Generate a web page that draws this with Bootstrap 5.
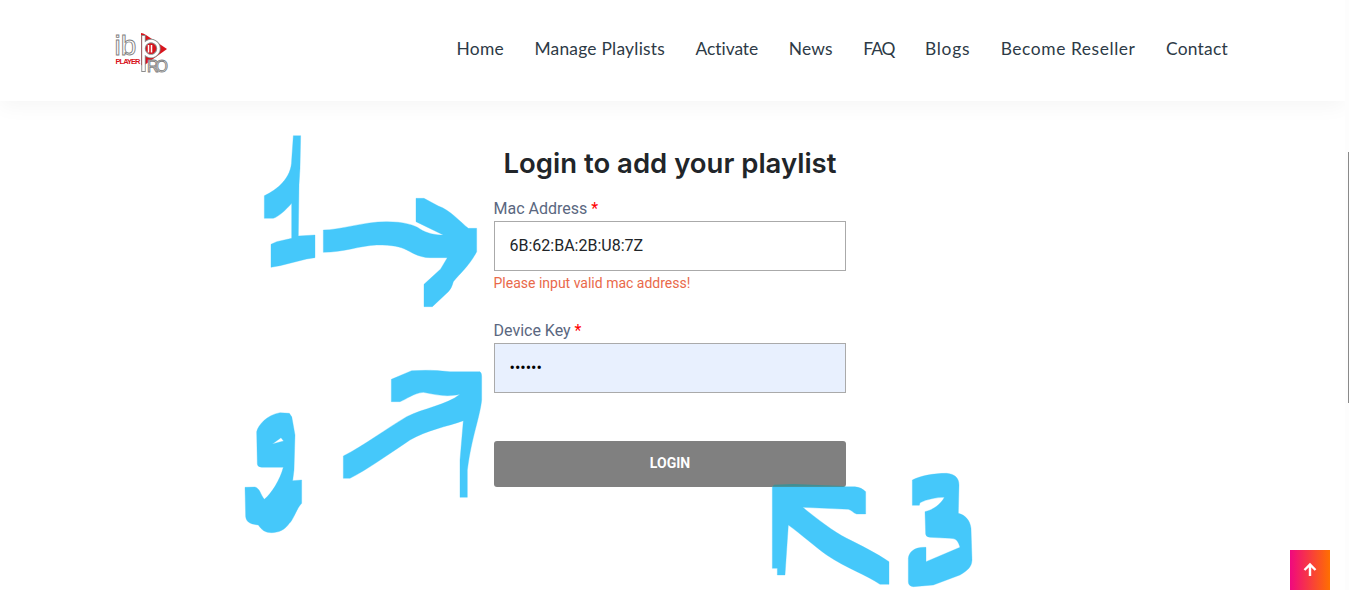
<!DOCTYPE html>
<html lang="en">
<head>
<meta charset="utf-8">
<title>Login</title>
<link href="https://cdn.jsdelivr.net/npm/bootstrap@5.3.0/dist/css/bootstrap.min.css" rel="stylesheet">
<style>
html,body{height:590px;overflow:hidden;background:#fff}
body{font-family:Roboto,sans-serif;position:relative}
.page-shell{width:1340px}
.top-bar{height:101px;background:#fff;box-shadow:0 5px 20px rgba(0,0,0,.045);padding:0 5px 0 0;margin-right:-5px}
.top-bar .container{max-width:1140px;padding:0 12px 0 15px}
.brand-mark{display:block;width:56px;height:44px}
.top-links{gap:30.5px;margin-top:-4px}
.top-links .nav-link{padding:0;font-family:Lato,sans-serif;font-size:17.4px;color:#2d3a46;letter-spacing:.24px;line-height:26px}
.top-links .nav-link.link-wide{letter-spacing:.58px}
.top-links .nav-link.link-tight{letter-spacing:-1px}
.top-links .nav-link.link-snug{letter-spacing:-.05px}
.top-links .nav-link.link-roomy{letter-spacing:.7px}
.login-box{width:352px;margin:0 auto;padding-top:44px}
.login-title{font-family:Inter,sans-serif;font-weight:600;font-size:27.5px;line-height:36px;color:#212529;text-align:center;margin-bottom:16px}
.field-label{font-size:16px;line-height:24px;color:#5a6780;margin-bottom:0;display:block;margin-left:-.5px}
.req{color:#f00}
.field-input.form-control{height:50px;border:1px solid #aaa;border-radius:0;font-size:16px;color:#212529;padding:0 15px 2px 14.500px;box-shadow:none}
.field-input.filled{background:#e8f0fe;color:#000;font-size:16px}
.field-error{font-size:14px;line-height:20px;color:#e9694a;margin:2px 0 26px -.5px}
.submit-btn.btn{height:46px;margin-top:48px;padding:0 0 2px;background:#808080;border:0;border-radius:3px;color:#fff;font-weight:700;font-size:14px;width:100%}
.ink-layer{position:absolute;left:0;top:0;width:1349px;height:590px;pointer-events:none}
.ink{fill:#45c8fa;stroke:#45c8fa;stroke-width:1;stroke-linejoin:round}
.to-top{position:absolute;left:1290px;top:550px;width:40px;height:40px;background:linear-gradient(90deg,#f0087f,#ff6f00);display:flex;align-items:center;justify-content:center}
.scroll-track{position:absolute;left:1345px;top:0;width:4px;height:590px;background:#fdfdfd}
.scroll-thumb{position:absolute;left:1348px;top:152px;width:1px;height:251px;background:#8a8a8a}
</style>
</head>
<body>
<div class="page-shell">
  <nav class="navbar top-bar">
    <div class="container d-flex align-items-center justify-content-between">
      <a class="navbar-brand p-0 m-0" href="#" aria-label="IBO Player Pro">
        <svg class="brand-mark" viewBox="115 27 56 44">
          <path d="M141 31 Q143 31 146 33 L167 47 L146 62 Q143 64 141 63 Z" fill="#d8141c"/>
          <text x="114.500" y="53" font-family="Liberation Sans,sans-serif" font-size="28" fill="#fff" stroke="#808080" stroke-width=".9">ib</text>
          <path d="M143.500 70 V33 M143.500 46.500 a7.500 7.500 0 1 1 0 .1" fill="none" stroke="#8c8c8c" stroke-width="4.400"/>
          <path d="M143.500 69 V34 M143.500 46.500 a7.500 7.500 0 1 1 0 .1" fill="none" stroke="#fff" stroke-width="2.600"/>
          <path d="M148.500 43 v7.500 M151.500 43 v7.500" stroke="#fff" stroke-width="1.500"/>
          <text x="115.500" y="62" font-family="Liberation Sans,sans-serif" font-size="7.500" font-weight="700" fill="#d8141c" textLength="25">PLAYER</text>
          <text x="147" y="69.500" font-family="Liberation Sans,sans-serif" font-size="16" fill="#fff" stroke="#7f7f7f" stroke-width=".9" textLength="21">RO</text>
        </svg>
      </a>
      <ul class="nav top-links">
        <li class="nav-item"><a class="nav-link" href="#">Home</a></li>
        <li class="nav-item"><a class="nav-link" href="#">Manage Playlists</a></li>
        <li class="nav-item"><a class="nav-link link-snug" href="#">Activate</a></li>
        <li class="nav-item"><a class="nav-link" href="#">News</a></li>
        <li class="nav-item"><a class="nav-link link-tight" href="#">FAQ</a></li>
        <li class="nav-item"><a class="nav-link link-roomy" href="#">Blogs</a></li>
        <li class="nav-item"><a class="nav-link link-wide" href="#">Become Reseller</a></li>
        <li class="nav-item"><a class="nav-link" href="#">Contact</a></li>
      </ul>
    </div>
  </nav>
  <main class="login-box">
    <h1 class="login-title">Login to add your playlist</h1>
    <form>
      <label class="field-label" for="mac">Mac Address <span class="req">*</span></label>
      <input id="mac" class="form-control field-input" type="text" value="6B:62:BA:2B:U8:7Z">
      <div class="field-error">Please input valid mac address!</div>
      <label class="field-label" for="key">Device Key <span class="req">*</span></label>
      <input id="key" class="form-control field-input filled" type="password" value="123456">
      <button type="button" class="btn submit-btn">LOGIN</button>
    </form>
  </main>
</div>

<svg class="ink-layer" viewBox="0 0 1349 590" aria-hidden="true">
  <g transform="translate(230 125) scale(.33333)">
    <path class="ink" d="M190 32 L212 32 L210 130 L207 180 L205 333 L255 330 L255 398 L230 402 L150 422 L123 427 L123 358 L140 350 L185 340 L185 235 C165 258 145 275 130 280 L103 280 L103 212 C140 195 185 160 185 105 Z"/>
    <path class="ink" d="M280 315 C330 315 400 290 470 290 C520 290 555 300 570 312 C590 325 615 330 640 330 L558 290 L558 220 L582 220 L625 243 C660 255 690 290 715 310 L740 310 L740 380 C720 420 690 445 670 470 Q665 490 655 500 L607 545 L582 545 L582 478 L632 432 L652 398 L600 398 C570 398 550 385 530 375 C510 365 490 360 440 360 C390 362 340 382 280 382 Z"/>
  </g>
  <g transform="translate(230 360) scale(.33333)">
    <path class="ink" fill-rule="evenodd" d="M150 158 L178 160 Q187 170 187 180 L195 225 L192 330 L188 362 L215 360 L215 430 C200 445 190 480 178 490 C165 510 145 518 125 518 C105 518 95 510 85 495 C65 492 50 490 47 470 L45 382 L75 381 C90 385 92 405 103 418 C125 400 150 360 160 322 L95 322 Q82 320 82 312 L80 215 C85 195 110 165 150 158 Z M127 252 L153 233 L161 243 Z"/>
    <path class="ink" d="M340 288 C400 258 470 205 530 170 C580 145 650 135 690 103 C650 112 620 105 580 97 C550 100 530 118 510 125 L484 125 L484 58 L545 32 Q600 28 660 35 L750 35 Q755 38 755 50 L755 120 C750 170 725 230 712 330 L712 412 L690 412 L690 300 L700 182 C650 200 590 210 540 240 C480 280 410 330 360 355 L340 355 Z"/>
  </g>
  <g transform="translate(760 460) scale(.33333)">
    <path class="ink" d="M37 80 L285 80 Q305 82 317 95 L317 162 L290 162 C280 160 275 150 265 148 L128 142 C170 175 220 215 260 235 C300 255 350 280 387 305 L387 373 L360 373 C320 345 260 325 200 285 C165 260 120 220 85 195 L75 345 L52 345 L52 325 L37 325 Z"/>
    <path d="M37 80 L42 74 L100 72 L250 78 L257 80 Z" fill="#3f8f94"/>
    <path class="ink" d="M457 60 C480 48 520 40 560 40 C585 42 597 55 597 75 L595 160 C615 165 630 180 633 205 L636 300 C635 320 625 330 600 345 L520 375 L460 380 Q445 378 445 365 L445 295 C447 275 465 260 498 262 L498 305 L600 262 C595 245 590 235 570 235 L510 232 Q497 230 497 222 L495 155 C520 150 545 130 553 112 C530 112 500 118 480 128 L478 136 L457 136 Z"/>
  </g>
</svg>

<a class="to-top" href="#" aria-label="Back to top">
  <svg width="16" height="16" viewBox="0 0 16 16"><path d="M8 14V3M2.500 8 8 2.500 13.500 8" fill="none" stroke="#fff" stroke-width="2.400"/></svg>
</a>
<div class="scroll-track"></div>
<div class="scroll-thumb"></div>
<script src="https://cdn.jsdelivr.net/npm/bootstrap@5.3.0/dist/js/bootstrap.bundle.min.js"></script>
</body>
</html>
